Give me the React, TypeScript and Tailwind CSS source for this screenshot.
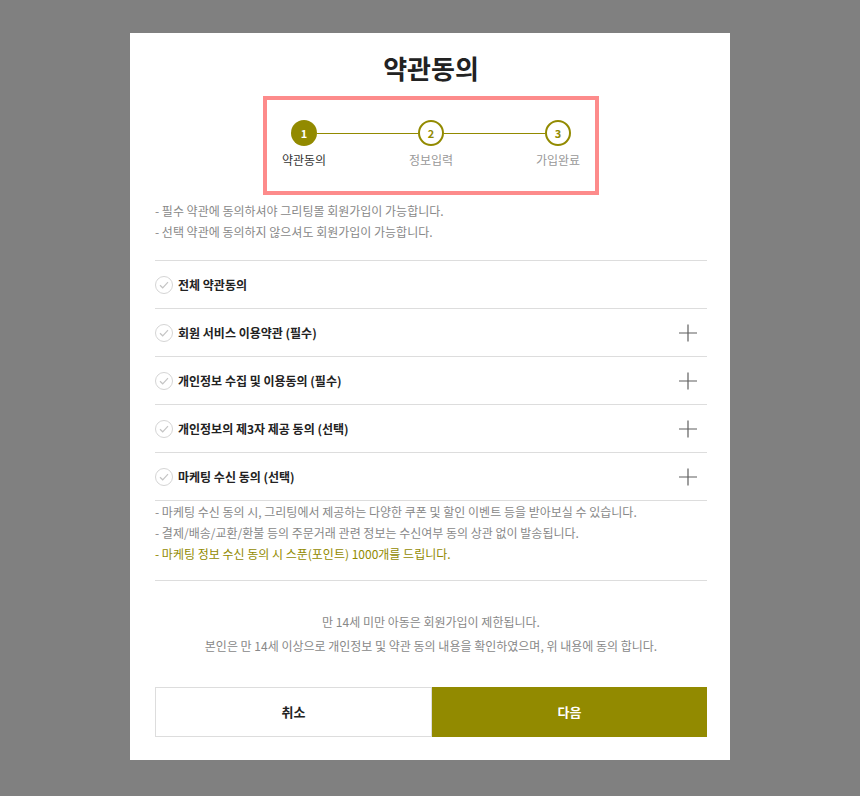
const OLIVE = "#928a00";

const steps = [
  { n: 1, label: "약관동의" },
  { n: 2, label: "정보입력" },
  { n: 3, label: "가입완료" },
];

const terms = [
  { title: "전체 약관동의", more: false },
  { title: "회원 서비스 이용약관 (필수)", more: true },
  { title: "개인정보 수집 및 이용동의 (필수)", more: true },
  { title: "개인정보의 제3자 제공 동의 (선택)", more: true },
  { title: "마케팅 수신 동의 (선택)", more: true },
];

function CheckCircle() {
  return (
    <span className="flex h-[18px] w-[18px] shrink-0 items-center justify-center rounded-full border border-[#d5d5d5] bg-white">
      <svg width="10" height="8" viewBox="0 0 10 8" fill="none">
        <path d="M1 4.2L3.7 6.8L9 1.2" stroke="#c4c4c4" strokeWidth="1.2" />
      </svg>
    </span>
  );
}

function PlusIcon() {
  return (
    <svg width="18" height="18" viewBox="0 0 18 18" fill="none" className="mr-[10px] shrink-0">
      <path d="M9 0.5V17.5M0 9H18" stroke="#5f5f5f" strokeWidth="1.2" />
    </svg>
  );
}

export default function App() {
  return (
    <div
      className="flex min-h-screen justify-center bg-[#808080] pt-[33px]"
      style={{ fontFamily: '"Noto Sans CJK KR", "Noto Sans", sans-serif' }}
    >
      <div className="flex h-fit w-[600px] flex-col bg-white pb-[23px] pl-[25px] pr-[23px] pt-[17px]">
        <h1 className="text-center text-[26px] font-bold leading-[36px] text-[#222]">약관동의</h1>

        {/* stepper */}
        <div className="mx-auto mt-[10px] w-[336px] border-4 border-[#fd8b8b] px-[7px] pb-[23px] pt-[20px]">
          <div className="flex items-start">
            {steps.map((s, i) => (
              <div key={s.n} className="contents">
                {i > 0 && <div className="relative z-0 -mx-[17px] mt-[13px] h-px flex-1 bg-[#928a00]" />}
                <div className="relative z-10 flex w-[60px] flex-col items-center">
                  <span
                    className={
                      s.n === 1
                        ? "flex h-[26px] w-[26px] items-center justify-center rounded-full bg-[#928a00] text-[11px] font-bold text-white"
                        : "flex h-[26px] w-[26px] items-center justify-center rounded-full border-2 border-[#928a00] bg-white text-[11px] font-bold text-[#928a00]"
                    }
                  >
                    {s.n}
                  </span>
                  <span
                    className={
                      s.n === 1
                        ? "mt-[6px] text-[12px] leading-[16px] text-[#333]"
                        : "mt-[6px] text-[12px] leading-[16px] text-[#999]"
                    }
                  >
                    {s.label}
                  </span>
                </div>
              </div>
            ))}
          </div>
        </div>

        <div className="mt-[5px] text-[12px] leading-[21px] text-[#888]">
          <p>- 필수 약관에 동의하셔야 그리팅몰 회원가입이 가능합니다.</p>
          <p>- 선택 약관에 동의하지 않으셔도 회원가입이 가능합니다.</p>
        </div>

        <ul className="mt-[18px] border-t border-[#dddddd]">
          {terms.map((t) => (
            <li key={t.title} className="flex h-[48px] items-center border-b border-[#dddddd]">
              <CheckCircle />
              <span className="ml-[5px] flex-1 text-[12px] font-bold text-[#222]">{t.title}</span>
              {t.more && <PlusIcon />}
            </li>
          ))}
        </ul>

        <div className="border-b border-[#dddddd] pb-[16px] text-[12px] leading-[21px] text-[#888]">
          <p>- 마케팅 수신 동의 시, 그리팅에서 제공하는 다양한 쿠폰 및 할인 이벤트 등을 받아보실 수 있습니다.</p>
          <p>- 결제/배송/교환/환불 등의 주문거래 관련 정보는 수신여부 동의 상관 없이 발송됩니다.</p>
          <p style={{ color: OLIVE }}>- 마케팅 정보 수신 동의 시 스푼(포인트) 1000개를 드립니다.</p>
        </div>

        <div className="mt-[29px] text-center text-[12px] leading-[24px] text-[#888]">
          <p>만 14세 미만 아동은 회원가입이 제한됩니다.</p>
          <p>본인은 만 14세 이상으로 개인정보 및 약관 동의 내용을 확인하였으며, 위 내용에 동의 합니다.</p>
        </div>

        <div className="mt-[29px] flex h-[50px]">
          <button className="flex-1 border border-[#dddddd] bg-white text-[13px] font-bold text-[#222]">취소</button>
          <button className="flex-1 bg-[#928a00] text-[13px] font-bold text-white">다음</button>
        </div>
      </div>
    </div>
  );
}
